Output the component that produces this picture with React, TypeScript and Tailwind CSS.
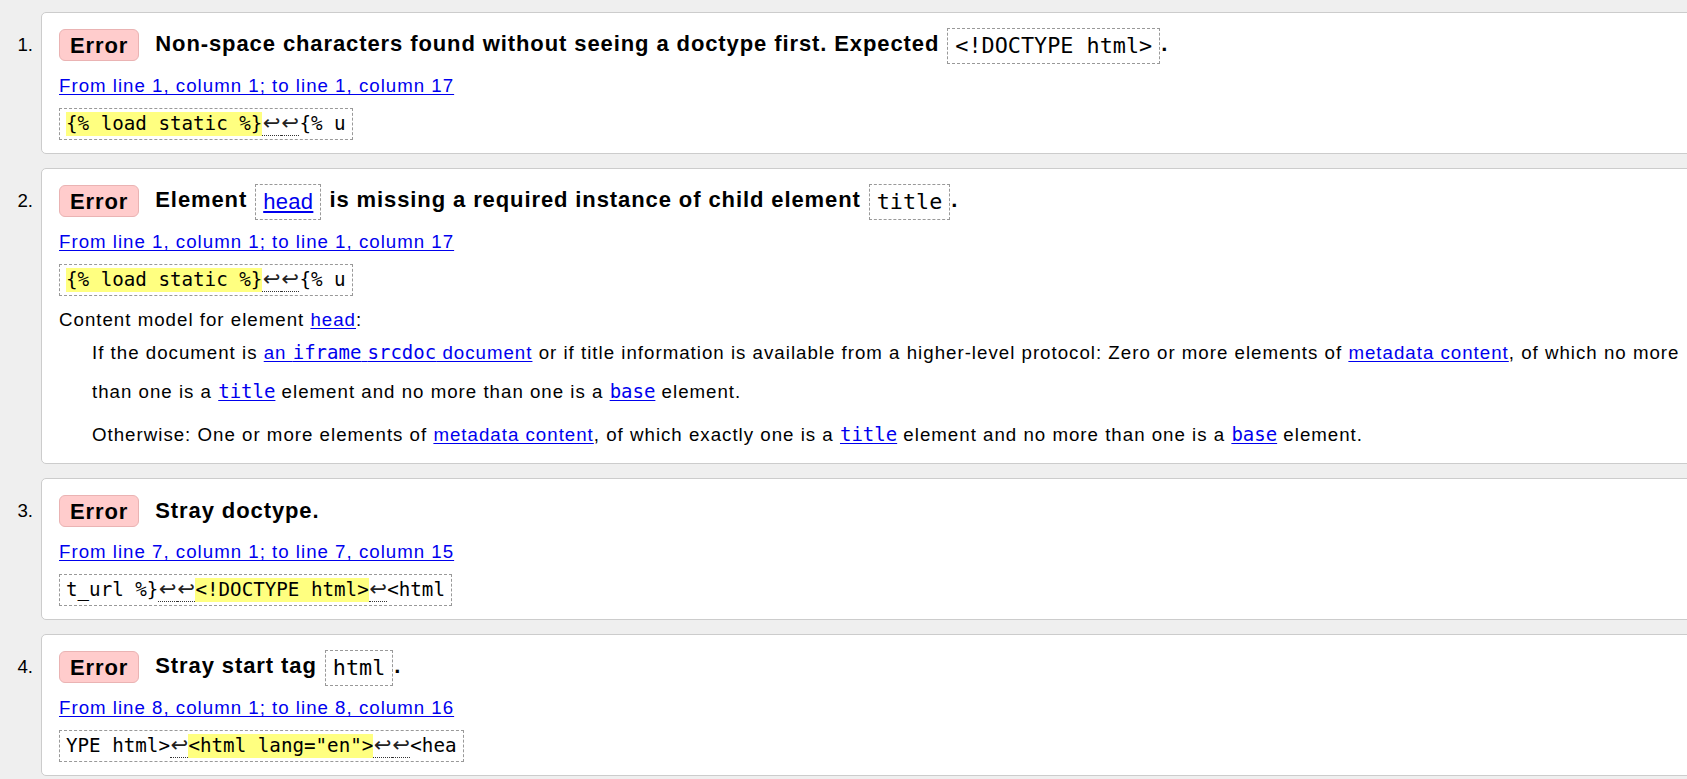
import React from "react";

type Part = string | React.ReactNode;

const MONO = "font-['DejaVu_Sans_Mono','Liberation_Mono',monospace] tracking-normal";

function Box({ children, mono }: { children: React.ReactNode; mono?: boolean }) {
    return (
        <span
            className={`mx-[1px] inline-block h-[36px] border border-dashed border-[#999] px-[7px] align-middle leading-[34px] font-normal ${mono ? "font-['DejaVu_Sans_Mono','Liberation_Mono',monospace] text-[21.8px] tracking-normal" : ""}`}
        >
            {children}
        </span>
    );
}

function Link({ children }: { children: React.ReactNode }) {
    return <a className="cursor-pointer text-[#0000ee] underline underline-offset-[2px]">{children}</a>;
}

function Mono({ children }: { children: React.ReactNode }) {
    return <span className={`${MONO} text-[19px]`}>{children}</span>;
}

// one ↩ glyph, wider than the mono cells
function Ret() {
    return (
        <span className="inline-block h-[24px] w-[18.5px] border-b border-dotted border-[#333] text-center font-['DejaVu_Sans',sans-serif] text-[21px] leading-[23px] text-[#222]">
            ↩
        </span>
    );
}

function Extract({ parts }: { parts: { text: string; kind: "plain" | "hl" | "ret" }[] }) {
    return (
        <div className={`mt-[10px] inline-flex h-[32px] items-center border border-dashed border-[#999] pl-[6px] pr-[6px] ${MONO} text-[19.2px]`}>
            {parts.map((p, i) => {
                if (p.kind === "ret") {
                    return (
                        <span key={i} className="inline-flex">
                            {p.text.split("").map((_, j) => (
                                <Ret key={j} />
                            ))}
                        </span>
                    );
                }
                return (
                    <span
                        key={i}
                        className={`inline-block h-[24px] whitespace-pre leading-[24px] ${p.kind === "hl" ? "bg-[#ffff80]" : ""}`}
                    >
                        {p.text}
                    </span>
                );
            })}
        </div>
    );
}

function Item({
    n,
    title,
    from,
    extract,
    children,
    pb = "pb-[13px]",
}: {
    n: number;
    title: Part;
    from: string;
    extract: { text: string; kind: "plain" | "hl" | "ret" }[];
    children?: React.ReactNode;
    pb?: string;
}) {
    return (
        <li className="flex items-start">
            <div className="mt-[17px] w-[41px] shrink-0 pr-[8px] text-right leading-[32px] tracking-normal">{n}.</div>
            <div className={`flex-1 rounded-[5px] border border-[#cccccc] bg-white pl-[17px] pt-[16px] ${pb}`}>
                <div className="flex h-[32px] items-center whitespace-nowrap">
                    <span className="inline-flex h-[32px] items-center rounded-[6px] border border-[#eab3b3] bg-[#ffcccc] px-[10px] text-[22px] font-bold tracking-[0.9px]">
                        Error
                    </span>
                    <h2 className="ml-[16px] text-[22px] font-bold leading-[36px] tracking-[0.9px]">{title}</h2>
                </div>
                <div className="mt-[13px] leading-[24px]">
                    <Link>{from}</Link>
                </div>
                <Extract parts={extract} />
                {children}
            </div>
        </li>
    );
}

export default function App() {
    return (
        <div className="min-h-screen overflow-hidden bg-[#efefef] font-['Liberation_Sans',Arial,sans-serif] text-[18.7px] tracking-[1px] text-black">
            <ol className="mr-[-40px] flex flex-col gap-[14px] pt-[12px]">
                <Item
                    n={1}
                    title={
                        <>
                            Non-space characters found without seeing a doctype first. Expected <Box mono>&lt;!DOCTYPE html&gt;</Box>.
                        </>
                    }
                    from="From line 1, column 1; to line 1, column 17"
                    extract={[
                        { text: "{% load static %}", kind: "hl" },
                        { text: "↩↩", kind: "ret" },
                        { text: "{% u", kind: "plain" },
                    ]}
                />
                <Item
                    n={2}
                    title={
                        <>
                            Element{" "}
                            <Box>
                                <Link>
                                    <span className="tracking-[0.3px]">head</span>
                                </Link>
                            </Box>{" "}
                            is missing a required instance of child element <Box mono>title</Box>.
                        </>
                    }
                    from="From line 1, column 1; to line 1, column 17"
                    extract={[
                        { text: "{% load static %}", kind: "hl" },
                        { text: "↩↩", kind: "ret" },
                        { text: "{% u", kind: "plain" },
                    ]}
                    pb="pb-[9px]"
                >
                    <p className="mt-[12px] leading-[24px]">
                        Content model for element <Link>head</Link>:
                    </p>
                    <div className="ml-[33px]">
                        <p className="mt-[1px] whitespace-nowrap leading-[39px]">
                            If the document is{" "}
                            <Link>
                                an <Mono>iframe</Mono> <Mono>srcdoc</Mono> document
                            </Link>{" "}
                            or if title information is available from a higher-level protocol: Zero or more elements of{" "}
                            <Link>metadata content</Link>, of which no more
                            <br />
                            than one is a <Link><Mono>title</Mono></Link> element and no more than one is a{" "}
                            <Link><Mono>base</Mono></Link> element.
                        </p>
                        <p className="mt-[4px] whitespace-nowrap leading-[39px]">
                            Otherwise: One or more elements of <Link>metadata content</Link>, of which exactly one is a{" "}
                            <Link><Mono>title</Mono></Link> element and no more than one is a <Link><Mono>base</Mono></Link> element.
                        </p>
                    </div>
                </Item>
                <Item
                    n={3}
                    title="Stray doctype."
                    from="From line 7, column 1; to line 7, column 15"
                    extract={[
                        { text: "t_url %}", kind: "plain" },
                        { text: "↩↩", kind: "ret" },
                        { text: "<!DOCTYPE html>", kind: "hl" },
                        { text: "↩", kind: "ret" },
                        { text: "<html", kind: "plain" },
                    ]}
                />
                <Item
                    n={4}
                    title={
                        <>
                            Stray start tag <Box mono>html</Box>.
                        </>
                    }
                    from="From line 8, column 1; to line 8, column 16"
                    extract={[
                        { text: "YPE html>", kind: "plain" },
                        { text: "↩", kind: "ret" },
                        { text: '<html lang="en">', kind: "hl" },
                        { text: "↩↩", kind: "ret" },
                        { text: "<hea", kind: "plain" },
                    ]}
                />
            </ol>
        </div>
    );
}
